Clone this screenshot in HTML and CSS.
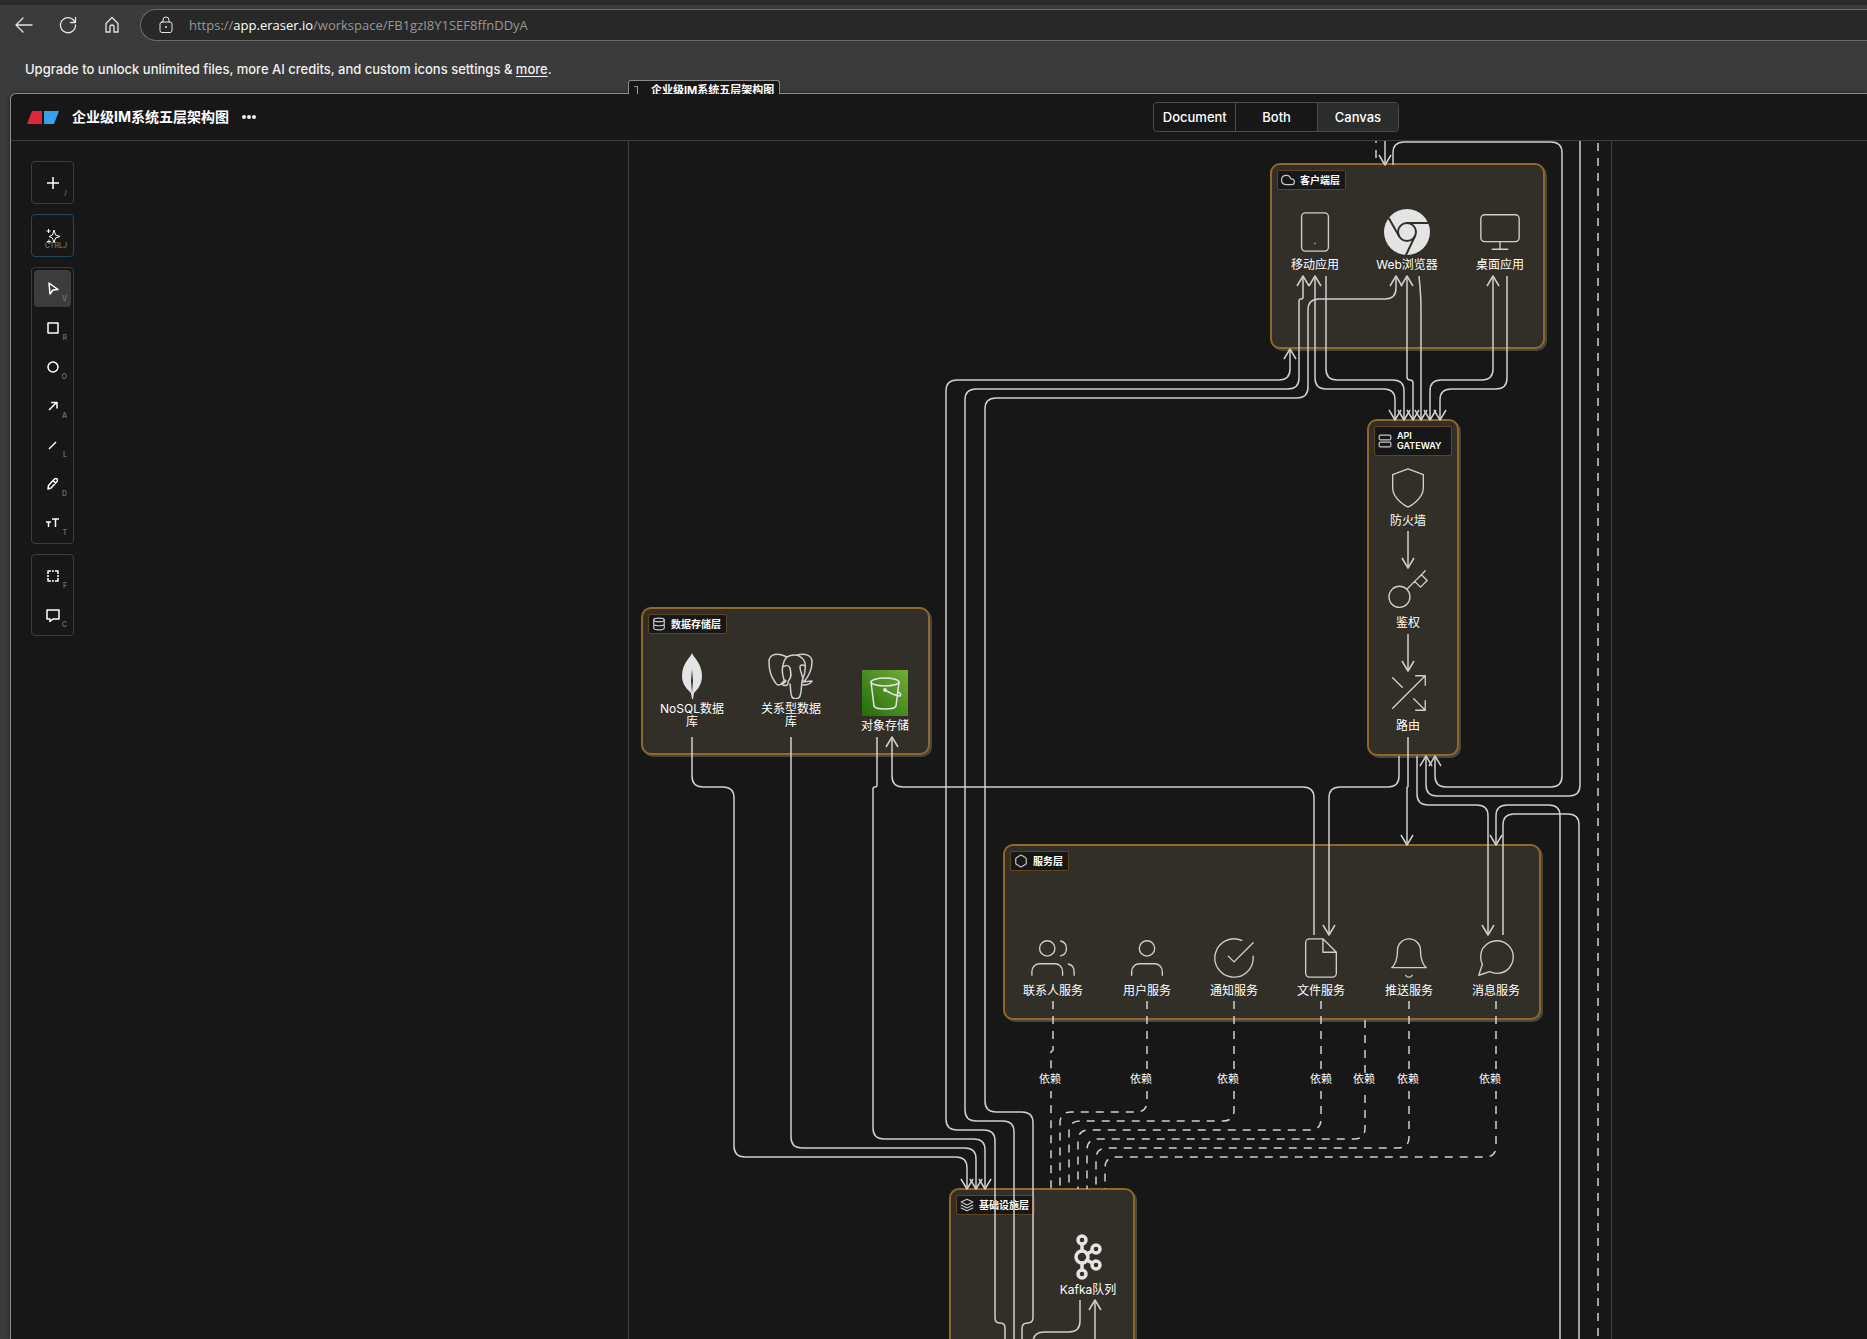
FILE: index.html
```html
<!DOCTYPE html>
<html lang="zh-CN">
<head>
  <meta charset="UTF-8">
  <meta name="viewport" content="width=device-width, initial-scale=1.0">
  <title>企业级IM系统五层架构图</title>
  <link rel="stylesheet" href="styles.css">
</head>
<body>

<!-- Browser bar -->
<nav class="browser-bar">
  <button class="nav-btn" aria-label="Back"><svg viewBox="0 0 20 20"><path d="M18 10H2M9 3l-7 7 7 7"/></svg></button>
  <button class="nav-btn" aria-label="Refresh"><svg viewBox="0 0 20 20"><path d="M17 7.500A7.500 7.500 0 1 0 17.500 10M17.500 2.500v5h-5"/></svg></button>
  <button class="nav-btn" aria-label="Home"><svg viewBox="0 0 20 20"><path d="M4 8.500L10 2.500l6 6V17h-4v-5a2 2 0 0 0-4 0v5H4z"/></svg></button>
  <div class="address">
    <svg class="lock" viewBox="0 0 20 20"><rect x="4" y="7" width="12" height="10.500" rx="2"/><path d="M7 7V5a3 3 0 0 1 6 0v2"/><circle class="solid" cx="10" cy="12" r="1"/></svg>
    <div class="url" role="textbox" aria-label="Address">https://<b>app.eraser.io</b>/workspace/FB1gzI8Y1SEF8ffnDDyA</div>
  </div>
</nav>

<p class="banner">Upgrade to unlock unlimited files, more AI credits, and custom icons settings &amp; <a href="#">more</a>.</p>

<main class="app">
  <div class="frame-tab"><span>企业级IM系统五层架构图</span></div>

  <header class="app-header">
    <div class="file">
      <svg class="logo" viewBox="0 0 32 13"><path fill="#e0263c" d="M5 0h10v13H0z"/><path fill="#37a3e6" d="M17 0h15l-5 13H17z"/></svg>
      <h1>企业级IM系统五层架构图</h1>
      <button class="more-btn" aria-label="More"><svg viewBox="0 0 14 4"><circle cx="2" cy="2" r="2"/><circle cx="7" cy="2" r="2"/><circle cx="12" cy="2" r="2"/></svg></button>
    </div>
    <div class="view-switch">
      <button>Document</button><button>Both</button><button class="active">Canvas</button>
    </div>
  </header>

  <div class="workspace">
    <!-- Tools -->
    <aside class="tools">
      <div class="tool-group">
        <button aria-label="Insert"><svg viewBox="0 0 16 16"><path d="M8 2v12M2 8h12"/></svg><kbd>/</kbd></button>
      </div>
      <div class="tool-group ai">
        <button aria-label="AI"><svg viewBox="0 0 16 16"><path d="M9 2l1.500 5L15 8.500 10.500 10 9 15 7.500 10 4 8.500 7.500 7zM3.500 1v4M1.500 3h4M4 11.500v4M2 13.500h4"/></svg><kbd>CTRLJ</kbd></button>
      </div>
      <div class="tool-group">
        <button class="active" aria-label="Select"><svg viewBox="0 0 16 16"><path d="M4 2l9 6.500-5 .5-3 4z"/></svg><kbd>V</kbd></button>
        <button aria-label="Rectangle"><svg viewBox="0 0 16 16"><path d="M3 3h10v10H3z"/></svg><kbd>R</kbd></button>
        <button aria-label="Ellipse"><svg viewBox="0 0 16 16"><circle cx="8" cy="8" r="5"/></svg><kbd>O</kbd></button>
        <button aria-label="Arrow"><svg viewBox="0 0 16 16"><path d="M4 12l7-7M6 4.500h6v6"/></svg><kbd>A</kbd></button>
        <button aria-label="Line"><svg viewBox="0 0 16 16"><path d="M4 12l7-7"/></svg><kbd>L</kbd></button>
        <button aria-label="Draw"><svg viewBox="0 0 16 16"><path d="M3 13l.5-3.500 6-6.500q1.500-1 2.500 0t0 2.500l-6 6.500zM8.500 5L11 7.500"/></svg><kbd>D</kbd></button>
        <button aria-label="Text"><svg viewBox="0 0 16 16"><path d="M7 4h7M10.500 4v8M1 7h5M3.500 7v5"/></svg><kbd>T</kbd></button>
      </div>
      <div class="tool-group">
        <button aria-label="Frame"><svg viewBox="0 0 16 16"><path d="M3 6V3h3M7 3h2M10 3h3v3M13 7v2M13 10v3h-3M9 13H7M6 13H3v-3M3 9V7"/></svg><kbd>F</kbd></button>
        <button aria-label="Comment"><svg viewBox="0 0 16 16"><path d="M2 3h12v9H8l-3 2.500V12H2z"/></svg><kbd>C</kbd></button>
      </div>
    </aside>

    <!-- Diagram -->
    <div class="board">
      <div class="frame"></div>

      <section class="layer client"><h2><svg viewBox="0 0 24 24"><path d="M18 10h-1.260A8 8 0 1 0 9 20h9a5 5 0 0 0 0-10z"/></svg>客户端层</h2></section>
      <section class="layer gateway"><h2><svg viewBox="0 0 24 24"><rect x="2" y="2" width="20" height="8" rx="2"/><rect x="2" y="14" width="20" height="8" rx="2"/></svg>API<br>GATEWAY</h2></section>
      <section class="layer storage"><h2><svg viewBox="0 0 24 24"><ellipse cx="12" cy="5" rx="9" ry="3"/><path d="M21 12c0 1.660-4 3-9 3s-9-1.340-9-3M3 5v14c0 1.660 4 3 9 3s9-1.340 9-3V5"/></svg>数据存储层</h2></section>
      <section class="layer service"><h2><svg viewBox="0 0 24 24"><path d="M21 16V8a2 2 0 0 0-1-1.730l-7-4a2 2 0 0 0-2 0l-7 4A2 2 0 0 0 3 8v8a2 2 0 0 0 1 1.730l7 4a2 2 0 0 0 2 0l7-4A2 2 0 0 0 21 16z"/></svg>服务层</h2></section>
      <section class="layer infra"><h2><svg viewBox="0 0 24 24"><path d="M12 2L2 7l10 5 10-5zM2 12l10 5 10-5M2 17l10 5 10-5"/></svg>基础设施层</h2></section>

      <div class="node mobile"><svg viewBox="0 0 24 24"><rect x="5" y="2" width="14" height="20" rx="2"/><path d="M12 18h.010"/></svg>移动应用</div>
      <div class="node web">
        <svg viewBox="0 0 46 46"><circle class="solid" cx="23" cy="23" r="23"/><g class="cut"><circle cx="23" cy="23" r="9"/><path d="M23 14h21M15 27L5 9.500M31 27L22 46"/></g></svg>Web浏览器
      </div>
      <div class="node desktop"><svg viewBox="0 0 24 24"><rect x="2" y="3" width="20" height="14" rx="2"/><path d="M8 21h8M12 17v4"/></svg>桌面应用</div>

      <div class="node firewall"><svg viewBox="0 0 24 24"><path d="M12 22s8-4 8-10V5l-8-3-8 3v7c0 6 8 10 8 10z"/></svg>防火墙</div>
      <div class="node auth"><svg viewBox="0 0 24 24"><path d="M21 2l-2 2m-7.610 7.610a5.500 5.500 0 1 1-7.778 7.778 5.500 5.500 0 0 1 7.777-7.777zm0 0L15.500 7.500m0 0l3 3L22 7l-3-3m-3.500 3.500L19 4"/></svg>鉴权</div>
      <div class="node route"><svg viewBox="0 0 24 24"><path d="M16 3h5v5M4 20L21 3M21 16v5h-5M15 15l6 6M4 4l5 5"/></svg>路由</div>

      <div class="node nosql">
        <svg viewBox="0 0 46 46"><path class="solid" d="M23 0c1 4 10 10 10 23 0 9-5 14-8 17l-1 6h-1l-1-6c-3-3-9-8-9-17C13 10 22 4 23 0z"/><path fill="#322f28" stroke="none" d="M23 16l1 12-1 12-1-12z"/></svg>NoSQL数据库
      </div>
      <div class="node sql">
        <svg class="bold" viewBox="0 0 46 46"><path d="M14 2C7 0 1 2 1 9c0 8 3 16 6 20 2 4 5 4 8 0l2-2M16 27c-2-6-2-11-1-15 1-5 3-8 6-9 8-3 14 1 16 7 1 7 0 12-3 18M14 2l5 2M29 2c8-2 15 0 15 7 0 7-4 15-8 20M15 14c3-2 6-2 7 1 1 5 2 9-1 12-2 2 0 4-2 5-2 1-5 0-6-1 3 0 4-2 5-3M22 31c1 4 0 9 2 13 2 3 7 2 8-1 2-5 1-10 2-14l10-1c-1 2-4 4-9 4M37 13c-3-2-5-1-5 1 0 5 3 8 3 14"/></svg>关系型数据库
      </div>
      <div class="node object">
        <svg viewBox="0 0 46 46">
          <defs><linearGradient id="leaf" x1="0" y1="1" x2="1" y2="0"><stop stop-color="#236b0c"/><stop offset="1" stop-color="#73ad37"/></linearGradient></defs>
          <path fill="url(#leaf)" stroke="none" d="M0 0h46v46H0z"/>
          <g class="pail"><ellipse cx="23" cy="12" rx="14" ry="4"/><path d="M9 12l3 24c1 4 21 4 22 0l3-24M23 20c5 3 10 6 15 6 2-1 0-3-2-4"/><circle class="solid" cx="23" cy="20" r="2"/></g>
        </svg>对象存储
      </div>

      <div class="node contacts"><svg viewBox="0 0 24 24"><path d="M17 21v-2a4 4 0 0 0-4-4H5a4 4 0 0 0-4 4v2M23 21v-2a4 4 0 0 0-3-3.870M16 3.130a4 4 0 0 1 0 7.750"/><circle cx="9" cy="7" r="4"/></svg>联系人服务</div>
      <div class="node user"><svg viewBox="0 0 24 24"><path d="M20 21v-2a4 4 0 0 0-4-4H8a4 4 0 0 0-4 4v2"/><circle cx="12" cy="7" r="4"/></svg>用户服务</div>
      <div class="node notify"><svg viewBox="0 0 24 24"><path d="M22 11.080V12a10 10 0 1 1-5.930-9.140M22 4L12 14.010l-3-3"/></svg>通知服务</div>
      <div class="node files"><svg viewBox="0 0 24 24"><path d="M13 2H6a2 2 0 0 0-2 2v16a2 2 0 0 0 2 2h12a2 2 0 0 0 2-2V9zM13 2v7h7"/></svg>文件服务</div>
      <div class="node push"><svg viewBox="0 0 24 24"><path d="M18 8A6 6 0 0 0 6 8c0 7-3 9-3 9h18s-3-2-3-9M13.730 21a2 2 0 0 1-3.460 0"/></svg>推送服务</div>
      <div class="node message"><svg viewBox="0 0 24 24"><path d="M21 11.500a8.380 8.380 0 0 1-.9 3.800 8.500 8.500 0 0 1-7.600 4.700 8.380 8.380 0 0 1-3.800-.9L3 21l1.900-5.700a8.380 8.380 0 0 1-.9-3.800 8.500 8.500 0 0 1 4.700-7.600 8.380 8.380 0 0 1 3.800-.9h.5a8.480 8.480 0 0 1 8 8v.5z"/></svg>消息服务</div>

      <div class="node kafka">
        <svg class="heavy" viewBox="0 0 46 46"><circle cx="17" cy="6" r="4"/><circle cx="17" cy="23" r="6"/><circle cx="17" cy="40" r="4"/><circle cx="31" cy="15" r="4"/><circle cx="31" cy="31" r="4"/><path d="M17 10v7M17 29v7M22 20l5-3M22 26l5 3"/></svg>Kafka队列
      </div>

      <svg class="links" id="links">
        <defs>
          <marker id="arrow" markerUnits="userSpaceOnUse" markerWidth="14" markerHeight="14" refX="11" refY="7" orient="auto-start-reverse"><path d="M1 1l10 6-10 6"/></marker>
        </defs>
      </svg>

      <span class="dep dep-1">依赖</span>
      <span class="dep dep-2">依赖</span>
      <span class="dep dep-3">依赖</span>
      <span class="dep dep-4">依赖</span>
      <span class="dep dep-5">依赖</span>
      <span class="dep dep-6">依赖</span>
      <span class="dep dep-7">依赖</span>
    </div>
  </div>
</main>

<script>
// each link: points on the board, then which ends carry an arrow / dashes
const links = [
  // client layer, top
  {p: [[1376,135],[1376,158]], dash: true},
  {p: [[1385,130],[1385,165]], end: true},
  {p: [[1393,165],[1393,142],[1562,142],[1562,787],[1435,787],[1435,756]], end: true},
  {p: [[1580,130],[1580,796],[1426,796],[1426,756]], end: true},
  {p: [[1598,128],[1598,1400]], dash: true},
  // client layer to infrastructure
  {p: [[1290,349],[1290,380],[946,380],[946,1130],[995,1130],[995,1323],[1005,1323],[1005,1400]], start: true},
  {p: [[1303,276],[1303,299],[1299,299],[1299,389],[965,389],[965,1121],[1014,1121],[1014,1400]], start: true},
  {p: [[1396,276],[1396,299],[1308,299],[1308,398],[985,398],[985,1112],[1033,1112],[1033,1323],[1022,1323],[1022,1400]], start: true},
  // client layer to gateway
  {p: [[1315,276],[1315,389],[1395,389],[1395,420]], start: true, end: true},
  {p: [[1326,276],[1326,380],[1404,380],[1404,420]], end: true},
  {p: [[1407,276],[1407,380],[1413,380],[1413,420]], start: true, end: true},
  {p: [[1419,276],[1421,298],[1421,420]], end: true},
  {p: [[1493,276],[1493,380],[1430,380],[1430,420]], start: true, end: true},
  {p: [[1507,276],[1507,389],[1440,389],[1440,420]], end: true},
  // gateway
  {p: [[1408,531],[1408,568]], end: true},
  {p: [[1408,634],[1408,671]], end: true},
  {p: [[1408,737],[1408,787],[1407,787],[1407,845]], end: true},
  {p: [[1399,756],[1399,787],[1329,787],[1329,935]], end: true},
  {p: [[1417,756],[1417,805],[1488,805],[1488,935]], end: true},
  // services
  {p: [[1496,845],[1496,805],[1560,805],[1560,1400]], start: true},
  {p: [[1503,935],[1503,814],[1579,814],[1579,1400]]},
  {p: [[892,737],[892,787],[1314,787],[1314,935]], start: true},
  // storage
  {p: [[692,737],[692,787],[734,787],[734,1157],[967,1157],[967,1189]], end: true},
  {p: [[791,737],[791,1148],[976,1148],[976,1189]], end: true},
  {p: [[877,737],[877,787],[873,787],[873,1139],[985,1139],[985,1189]], end: true},
  // service dependencies
  {p: [[1053,1001],[1053,1051],[1051,1051],[1051,1189]], dash: true},
  {p: [[1147,1001],[1147,1112],[1060,1112],[1060,1189]], dash: true},
  {p: [[1234,1001],[1234,1121],[1069,1121],[1069,1189]], dash: true},
  {p: [[1321,1001],[1321,1130],[1078,1130],[1078,1189]], dash: true},
  {p: [[1365,1020],[1365,1139],[1087,1139],[1087,1189]], dash: true},
  {p: [[1409,1001],[1409,1148],[1096,1148],[1096,1189]], dash: true},
  {p: [[1496,1001],[1496,1157],[1105,1157],[1105,1189]], dash: true},
  // kafka
  {p: [[1080,1300],[1080,1332],[1033,1332],[1033,1400]]},
  {p: [[1095,1300],[1095,1400]], start: true},
];

// polyline with rounded corners
function roundedPath(pts) {
  const dist = (a, b) => Math.hypot(b[0] - a[0], b[1] - a[1]);
  const toward = (a, b, r) => {
    const d = dist(a, b);
    return [a[0] + (b[0] - a[0]) * r / d, a[1] + (b[1] - a[1]) * r / d];
  };
  let d = `M${pts[0]}`;
  for (let i = 1; i < pts.length - 1; i++) {
    const [a, b, c] = [pts[i - 1], pts[i], pts[i + 1]];
    const r = Math.min(11, dist(a, b) / 2, dist(b, c) / 2);
    d += `L${toward(b, a, r)}Q${b} ${toward(b, c, r)}`;
  }
  return d + `L${pts[pts.length - 1]}`;
}

const svg = document.getElementById('links');
links.forEach(link => {
  const path = document.createElementNS('http://www.w3.org/2000/svg', 'path');
  path.setAttribute('d', roundedPath(link.p));
  if (link.dash) path.classList.add('dashed');
  if (link.start) path.setAttribute('marker-start', 'url(#arrow)');
  if (link.end) path.setAttribute('marker-end', 'url(#arrow)');
  svg.appendChild(path);
});
</script>
</body>
</html>
```
FILE: styles.css
```css
* { box-sizing: border-box; }

body {
  margin: 0;
  height: 100vh;
  display: flex;
  flex-direction: column;
  overflow: hidden;
  background: #3b3b3b;
  color: #fff;
  font-family: Inter, "Noto Sans CJK SC", sans-serif;
  font-size: 13px;
}

button {
  padding: 0;
  border: none;
  background: none;
  color: inherit;
  font: inherit;
  cursor: pointer;
}

svg {
  display: block;
  fill: none;
  stroke: #e4e4e4;
  stroke-linecap: round;
  stroke-linejoin: round;
}

/* Browser bar */
.browser-bar {
  display: flex;
  align-items: center;
  height: 45px;
  border-top: 5px solid #2b2b2b;
  padding-left: 14px;
}
.nav-btn { margin-right: 24px; }
.nav-btn svg, .lock { width: 20px; height: 20px; }
.nav-btn svg { stroke-width: 1.3; }
.address {
  flex: 1;
  display: flex;
  align-items: center;
  gap: 13px;
  height: 32px;
  margin-left: -6px;
  padding-left: 15px;
  border: 1px solid #6c6c6c;
  border-right: none;
  border-radius: 16px 0 0 16px;
  background: #282828;
}
.url {
  color: #979797;
  font-family: "Open Sans", sans-serif;
}
.url b { color: #fff; font-weight: 400; }
.solid { fill: #e4e4e4; stroke: none; }

.banner {
  margin: 0;
  padding: 14px 25px 0;
  height: 48px;
  line-height: 20px;
  color: #f0f0f0;
  font-weight: 500;
}
.banner a { color: inherit; text-underline-offset: 2px; }

/* App window */
.app {
  position: relative;
  flex: 1;
  min-height: 0;
  display: flex;
  flex-direction: column;
  margin-left: 10px;
  border: 1px solid #8c8c8c;
  border-width: 1px 0 0 1px;
  border-radius: 6px 0 0 0;
  background: #171717;
  box-shadow: 0 0 4px #222;
}
.frame-tab {
  position: absolute;
  left: 617px;
  top: -14px;
  width: 152px;
  height: 14px;
  padding-left: 22px;
  overflow: hidden;
  border: 1px solid #8c8c8c;
  border-bottom: none;
  border-radius: 3px 3px 0 0;
  background: #171717;
  font-size: 11px;
  font-weight: 700;
  line-height: 18px;
  white-space: nowrap;
}
.frame-tab::before {
  content: "";
  position: absolute;
  left: 5px;
  top: 5px;
  width: 3px;
  height: 10px;
  border: 1px solid #999;
  border-width: 1px 1px 0 0;
}
.app-header {
  display: grid;
  grid-template-columns: 8fr 5fr;
  align-items: center;
  height: 47px;
  border-bottom: 1px solid #3e3e3e;
}
.file {
  display: flex;
  align-items: center;
  padding-left: 16px;
}
.logo { width: 32px; height: 13px; stroke: none; }
.file h1 {
  margin: 0 13px;
  font-size: 14px;
  line-height: 20px;
}
.more-btn svg {
  width: 14px;
  height: 4px;
  fill: #eee;
  stroke: none;
}
.view-switch {
  display: grid;
  grid-template-columns: repeat(3, 1fr);
  width: 246px;
  height: 30px;
  border: 1px solid #4c4c4c;
  border-radius: 4px;
  overflow: hidden;
}
.view-switch button { font-weight: 500; }
.view-switch button + button { border-left: 1px solid #4c4c4c; }
.view-switch .active { background: #2b2d2d; }

.workspace {
  position: relative;
  flex: 1;
  min-height: 0;
  overflow: hidden;
}

/* Tools */
.tools {
  display: flex;
  flex-direction: column;
  gap: 10px;
  width: 43px;
  margin: 20px;
}
.tool-group {
  display: flex;
  flex-direction: column;
  gap: 2px;
  padding: 2px;
  border: 1px solid #3c3c3c;
  border-radius: 4px;
}
.tool-group.ai { border-color: #24465c; }
.tools button {
  position: relative;
  display: flex;
  align-items: center;
  justify-content: center;
  height: 37px;
  border-radius: 4px;
}
.tools button.active { background: #3c3c3c; }
.tools button svg {
  width: 16px;
  height: 16px;
  stroke: #fff;
  stroke-width: 1.5;
  stroke-linecap: butt;
}
.tools .ai svg { stroke-width: 1; }
.tools kbd {
  position: absolute;
  right: 4px;
  bottom: 3px;
  color: #6c6c6c;
  font: 600 7px/10px Inter, sans-serif;
}

/* Diagram: board coordinates start at the window corner */
.board {
  position: absolute;
  left: -11px;
  top: -141px;
}
.frame {
  position: absolute;
  left: 628px;
  top: 80px;
  width: 984px;
  height: 2000px;
  border: 1px solid #3e3e3e;
}
.layer {
  position: absolute;
  padding: 5px;
  border: 2px solid #8f6827;
  border-radius: 10px;
  background: #322f28;
  box-shadow: 2px 2px 0 #464646;
}
.layer h2 {
  display: inline-grid;
  grid-template-columns: 12px auto;
  align-items: center;
  column-gap: 5px;
  margin: 0;
  padding: 4px 5px;
  border: 1px solid #5d4520;
  border-radius: 2px;
  background: #171717;
  font-size: 10px;
  line-height: 10px;
  white-space: nowrap;
}
.layer h2 svg {
  width: 14px;
  height: 14px;
  margin: -2px;
  stroke: #c8c8c8;
  stroke-width: 2;
}
.client { left: 1270px; top: 163px; width: 275px; height: 186px; }
.gateway { left: 1367px; top: 419px; width: 92px; height: 337px; }
.storage { left: 641px; top: 607px; width: 289px; height: 148px; }
.service { left: 1003px; top: 844px; width: 538px; height: 176px; }
.infra { left: 949px; top: 1188px; width: 186px; height: 300px; }
.gateway h2 {
  display: grid;
  font-size: 9px;
  font-weight: 600;
}
.gateway h2 svg { grid-row: span 2; }

.node {
  position: absolute;
  width: 66px;
  margin: -23px 0 0 -33px;
  text-align: center;
  font-size: 12px;
  line-height: 13px;
}
.node svg {
  width: 46px;
  height: 46px;
  margin: 0 auto 3px;
  stroke: #cfcfcf;
  stroke-width: 0.7;
}
.node .bold { stroke-width: 1.5; }
.node .heavy { stroke: #e4e4e4; stroke-width: 3.5; }
.node .pail { stroke: #e4e4e4; stroke-width: 1.5; }
.node .cut { stroke: #322f28; stroke-width: 2; }

.mobile { left: 1315px; top: 232px; }
.web { left: 1407px; top: 232px; }
.desktop { left: 1500px; top: 232px; }
.firewall { left: 1408px; top: 488px; }
.auth { left: 1408px; top: 590px; }
.route { left: 1408px; top: 693px; }
.nosql { left: 692px; top: 676px; }
.sql { left: 791px; top: 676px; }
.object { left: 885px; top: 693px; }
.contacts { left: 1053px; top: 958px; }
.user { left: 1147px; top: 958px; }
.notify { left: 1234px; top: 958px; }
.files { left: 1321px; top: 958px; }
.push { left: 1409px; top: 958px; }
.message { left: 1496px; top: 958px; }
.kafka { left: 1088px; top: 1257px; }

.links {
  position: absolute;
  left: 0;
  top: 0;
  width: 1px;
  height: 1px;
  overflow: visible;
  stroke: #cfcfcf;
  stroke-width: 1.5;
  stroke-linecap: butt;
}
.links .dashed { stroke-dasharray: 8 7; }

.dep {
  position: absolute;
  top: 1073px;
  width: 24px;
  height: 18px;
  margin-left: -12px;
  background: #171717;
  text-align: center;
  font-size: 11px;
  line-height: 13px;
}
.dep-1 { left: 1050px; }
.dep-2 { left: 1141px; }
.dep-3 { left: 1228px; }
.dep-4 { left: 1321px; }
.dep-5 { left: 1364px; }
.dep-6 { left: 1408px; }
.dep-7 { left: 1490px; }
```
